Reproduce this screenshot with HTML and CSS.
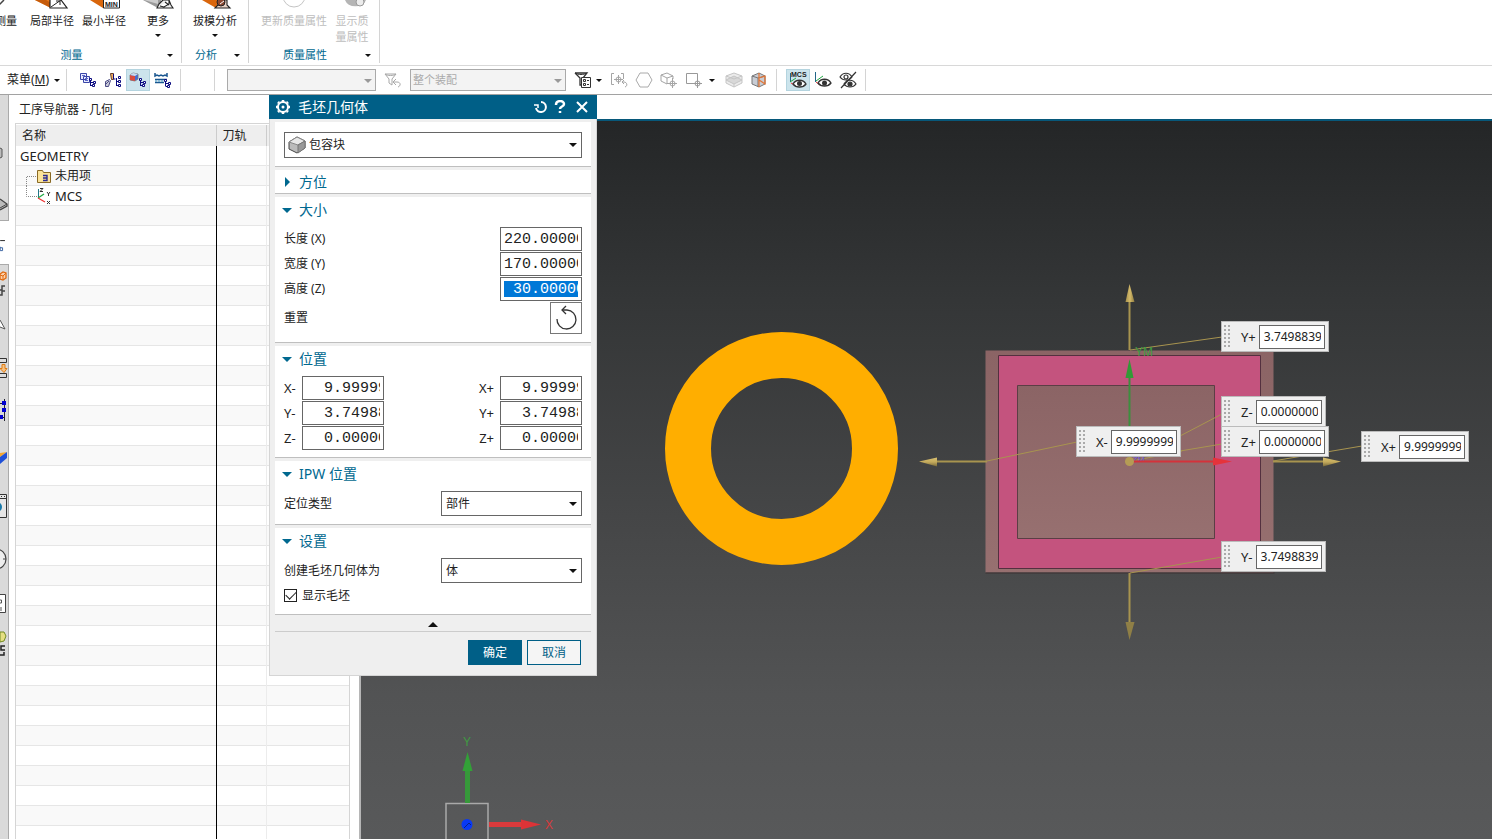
FILE: index.html
```html
<!DOCTYPE html>
<html lang="zh-CN">
<head>
<meta charset="utf-8">
<title>工序导航器 - 几何</title>
<link rel="stylesheet" href="styles.css">
</head>
<body>
<header class="ribbon">
  <section class="group group-measure">
    <div class="group-tools">
      <button class="tool tool-cut"><svg class="tool-icon" width="30" height="12" viewBox="0 0 30 12"><path d="M17 0l-6 6-4-3" fill="none" stroke="#444" stroke-width="1.5"/></svg>测量</button>
      <button class="tool"><svg class="tool-icon" width="34" height="12" viewBox="0 0 34 12"><path d="M0 0h16v8z" fill="#e87a1c"/><path d="M0 0l16 8V3L11 0z" fill="#c65c0b"/><path d="M15 0v8h17l-6-8" fill="#fff" stroke="#222" stroke-width="1.2"/><path d="M16 7L26 0M21 1h4v4" fill="none" stroke="#222"/></svg>局部半径</button>
      <button class="tool"><svg class="tool-icon" width="34" height="12" viewBox="0 0 34 12"><path d="M3 0h13v8z" fill="#d9660c"/><path d="M16.500 -1h16v9h-16z" fill="#fff" stroke="#222"/><text x="18" y="7" class="icon-text">MIN</text></svg>最小半径</button>
      <button class="tool"><svg class="tool-icon" width="34" height="12" viewBox="0 0 34 12"><path d="M2 0l15 8 3-3V0z" fill="#999"/><path d="M3 0h14v4z" fill="#ccc"/><path d="M18 4l4-4h6l2 5 2 3H16zM19 6l4 1 5-3V0M24 2l4 3" fill="#eee" stroke="#222" stroke-width="1.1"/></svg>更多<i class="caret"></i></button>
    </div>
    <button class="group-name">测量<i class="caret"></i></button>
  </section>
  <section class="group group-analysis">
    <div class="group-tools">
      <button class="tool"><svg class="tool-icon" width="34" height="12" viewBox="0 0 34 12"><path d="M4 0l14 8 3-8z" fill="#d9660c"/><path d="M17 8l4-4V0h8v5l3 3z" fill="#e9d2c6" stroke="#222" stroke-width="1.1"/><circle cx="23" cy="2" r="4" fill="#8b4730" stroke="#222"/><path d="M22 4l4-3" stroke="#fff"/></svg>拔模分析<i class="caret"></i></button>
    </div>
    <button class="group-name">分析<i class="caret"></i></button>
  </section>
  <section class="group group-mass">
    <div class="group-tools">
      <button class="tool" disabled><svg class="tool-icon" width="34" height="12" viewBox="0 0 34 12"><circle cx="17" cy="-4" r="11" fill="none" stroke="#c4c4c4"/></svg>更新质量属性</button>
      <button class="tool" disabled><svg class="tool-icon" width="34" height="12" viewBox="0 0 34 12"><path d="M10 0a11 9 0 0 0 21 0z" fill="#b5b5b5"/><circle cx="25" cy="2" r="4" fill="#ececec" stroke="#999"/></svg>显示质<br>量属性</button>
    </div>
    <button class="group-name">质量属性<i class="caret"></i></button>
  </section>
</header>

<div class="toolbar">
  <button class="menu-button"><span>菜单(<u>M</u>)</span><i class="caret"></i></button>
  <i class="divider"></i>
  <div class="view-buttons">
    <button class="icon-button" aria-label="程序顺序视图"><svg width="18" height="16" viewBox="0 0 18 16" fill="#e6eaff" stroke="#3b46a8"><path d="M1.500 1.500h6v6h-6zM4.500 4.500h6v6h-6z"/><path d="M3 3.500h3M6 6.500h3M6 8.500h3" stroke="#5a66c8"/><path d="M11.500 8v6M11.500 10.500h3M11.500 13.500h2" stroke="#0a0a80"/><path d="M10.500 6.500h2v2h-2zM14.500 9.500h2v2h-2zM13.500 12.500h2v2h-2z" fill="#fff" stroke="#0a0a80"/></svg></button>
    <button class="icon-button" aria-label="机床视图"><svg width="18" height="16" viewBox="0 0 18 16"><path d="M1.500 14.500v-5l4-2 1 1-2 6z" fill="#c9cbd8" stroke="#4c4c85"/><path d="M2 12l3-3" stroke="#4c4c85"/><path d="M6.500 1.500h3v6h-2z" fill="#f2b05f" stroke="#653e2b"/><path d="M9.500 2v5h2M12.500 6v8M12.500 9.500h2M12.500 13.500h2" fill="none" stroke="#0a0a80"/><path d="M14.500 4.500h2v2h-2zM14.500 8.500h2v2h-2zM14.500 12.500h2v2h-2z" fill="#fff" stroke="#0a0a80"/></svg></button>
    <button class="icon-button active" aria-label="几何视图"><svg width="18" height="16" viewBox="0 0 18 16"><path d="M1 3l3-2 5 1v5L6 9 1 8z" fill="#466bd2" stroke="#777" stroke-width=".8"/><path d="M1 3l5 1v5L1 8z" fill="#d94c3e"/><path d="M4 1l5 1-3 2-5-1z" fill="#c8dcf0"/><path d="M11.500 8v6M11.500 10.500h3M11.500 13.500h2" stroke="#0a0a80"/><path d="M10.500 6.500h2v2h-2zM14.500 9.500h2v2h-2zM13.500 12.500h2v2h-2z" fill="#fff" stroke="#0a0a80"/></svg></button>
    <button class="icon-button" aria-label="加工方法视图"><svg width="18" height="16" viewBox="0 0 18 16"><path d="M1 1v3l2-1 2 1 2-1 2 1 2-1 2 1V1M1 7.500h12M1 10.500h9" fill="none" stroke="#1b5790" stroke-width="1.500"/><path d="M2 8v2M5 8v2M8 8v2" stroke="#4aa0c8"/><path d="M11.500 9v5M11.500 11.500h3M11.500 14.500h2" stroke="#0a0a80"/><path d="M10.500 7.500h2v2h-2zM14.500 10.500h2v2h-2zM13.500 13.500h2v2h-2z" fill="#fff" stroke="#0a0a80"/></svg></button>
  </div>
  <i class="divider"></i>
  <i class="divider divider-far"></i>
  <span class="filter type-filter"><select aria-label="类型过滤器" disabled><option></option></select></span>
  <button class="icon-button" aria-label="重置过滤器"><svg width="18" height="16" viewBox="0 0 18 16" fill="none" stroke="#a8a8a8"><path d="M1 2h11L8 7v6l-3-2V7zM1 2c2 2 9 2 11 0M14 15c3-1 3-5-1-5h-3M12 7l-3 3 3 3"/></svg></button>
  <span class="filter scope-filter"><select aria-label="选择范围" disabled><option>整个装配</option></select></span>
  <div class="select-buttons">
    <button class="icon-button" aria-label="选择方式"><svg width="18" height="18" viewBox="0 0 18 18" fill="none" stroke="#333"><path d="M1 2h12L9 7M1 2l5 5v7h2" stroke-width="1.300"/><path d="M1 2c3 2 9 2 12 0"/><path d="M7.500 6.500h9v10h-9z" fill="#fff"/><path d="M9.500 8.500h2v2h-2zM9.500 12.500h2v2h-2zM13 9.500h2M13 13.500h2"/></svg></button>
    <i class="caret"></i>
  </div>
  <div class="snap-buttons">
    <button class="icon-button" aria-label="捕捉点"><svg width="18" height="16" viewBox="0 0 18 16" fill="none" stroke="#a5a5a5"><path d="M4 1.500H1.500v11H4M11 1.500h2.500V7M8.500 3v9M4 7.500h9M15 15c3-1 2-5-1-5h-2M14 8l-2 2 2 2"/><circle cx="8.500" cy="7.500" r="2.500"/></svg></button>
    <button class="icon-button" aria-label="多边形"><svg width="18" height="16" viewBox="0 0 18 16" fill="none" stroke="#aaa"><path d="M5 1h8l4 7-4 7H5L1 8z"/></svg></button>
    <button class="icon-button" aria-label="体"><svg width="18" height="16" viewBox="0 0 18 16" fill="none" stroke="#a5a5a5"><path d="M1 3l6-2 6 3v3M1 3v6l6 3V6L1 3M7 6l6-2M12.500 6v10M7 11.500h10"/><circle cx="12.500" cy="11.500" r="2.500"/></svg></button>
    <button class="icon-button" aria-label="矩形"><svg width="18" height="16" viewBox="0 0 18 16" fill="none" stroke="#999"><path d="M8 11.500H1.500v-10h11V6M12.500 6v10M7 11.500h10"/><circle cx="12.500" cy="11.500" r="2.500"/></svg></button>
    <i class="caret"></i>
  </div>
  <div class="snap-buttons">
    <button class="icon-button" aria-label="着色"><svg width="18" height="16" viewBox="0 0 18 16" stroke="#c5c5c5"><path d="M1 4l8-3 8 3v7l-8 4-8-4z" fill="#ececec"/><path d="M1 8l8-4 8 4-8 4z" fill="#d8d8d8"/><path d="M9 12v3M1 4l8 3 8-3" fill="none"/></svg></button>
    <button class="icon-button" aria-label="着色边"><svg width="18" height="16" viewBox="0 0 18 16" stroke="#777"><path d="M2 4l7-3 6 3v8l-6 3-7-3z" fill="#c8ccd4"/><path d="M2 4l6 2 7-2M8 6v9" fill="none"/><path d="M9 15V6l6-2v8l-6-4V1" fill="none" stroke="#e57533" stroke-width="1.200"/></svg></button>
  </div>
  <i class="divider"></i>
  <div class="view-buttons">
    <button class="icon-button active" aria-label="显示 MCS"><svg width="18" height="18" viewBox="0 0 18 18"><text x="2" y="6" class="icon-text">MCS</text><path d="M1.500 2v9" stroke="#268"/><path d="M1 11l6-4" stroke="#2a4"/><path d="M2 12l4 2" stroke="#e33"/><path d="M4 13c3-5 10-5 13 0-3 4-10 4-13 0z" fill="#fff" stroke="#333" stroke-width="1.300"/><circle cx="10.500" cy="12.500" r="2.500" fill="#333"/></svg></button>
    <button class="icon-button" aria-label="显示坐标系"><svg width="18" height="18" viewBox="0 0 18 18"><path d="M1.500 1v10" stroke="#268"/><path d="M2 10l7-5" stroke="#2a4"/><path d="M2 11l4 3" stroke="#e33"/><path d="M4 12c3-5 10-5 13 0-3 4-10 4-13 0z" fill="#fff" stroke="#333" stroke-width="1.300"/><circle cx="10.500" cy="12" r="2.500" fill="#333"/></svg></button>
    <button class="icon-button" aria-label="隐藏"><svg width="18" height="18" viewBox="0 0 18 18" fill="none" stroke="#333" stroke-width="1.200"><path d="M1 6c3-5 9-5 12 0-3 4-9 4-12 0zM5 13c3-5 9-5 12 0-3 4-9 4-12 0zM2 17L17 1"/><circle cx="7" cy="6" r="2"/><circle cx="11" cy="13" r="2" fill="#333"/></svg></button>
  </div>
  <i class="divider"></i>
</div>

<main class="workspace">
  <nav class="rail" aria-label="资源条">
    <button aria-label="装配导航器"><svg viewBox="0 132 8 44"><path d="M0 148l2 1v8l-2 1" fill="#bbb" stroke="#555"/></svg></button>
    <button aria-label="部件导航器"><svg viewBox="0 176 8 44"><path d="M0 199l7 5v2l-7 4" fill="#bbb" stroke="#444" stroke-width="1.300"/><path d="M0 208l7-4" stroke="#444"/></svg></button>
    <button class="active" aria-label="工序导航器"><svg viewBox="0 220 8 45"><path d="M0 240.500h5" stroke="#222"/><path d="M0 247v4h2.500v-3H0" fill="none" stroke="#35619f"/></svg></button>
    <button aria-label="加工特征"><svg viewBox="0 265 8 40"><path d="M0 274l3-2 3 1v5l-3 2-3-1z" fill="#fbd0ab" stroke="#e06a10" stroke-width="1.300"/><path d="M0 275l3 1 3-3M3 276v4" fill="none" stroke="#e06a10"/><path d="M5 286H2v4H0M0 295h2v-4h3" fill="none" stroke="#444" stroke-width="1.500"/></svg></button>
    <button aria-label="机床"><svg viewBox="0 305 8 42"><path d="M0 320l5 9-5-2" fill="#fff" stroke="#555"/></svg></button>
    <button aria-label="流程"><svg viewBox="0 347 8 42"><path d="M-1 358.500h7.500v4H-1zM-1 373.500h7.500v4H-1z" fill="#ddd" stroke="#333"/><path d="M2 364.500v4H0l4 4 3-4H5v-4z" fill="#f6c282" stroke="#e07a10"/></svg></button>
    <button aria-label="重用库"><svg viewBox="0 389 8 44"><path d="M4.500 399v22M0 403.500h5M0 417.500h5" stroke="#223" fill="none"/><path d="M2 401h4v4H2zM2 408h4v4H2zM0 415h3v4H0z" fill="#0000d0"/></svg></button>
    <button aria-label="HD3D"><svg viewBox="0 433 8 48"><path d="M0 453l7-1-7 5z" fill="#f3a52e"/><path d="M0 457l7-5v6l-7 6z" fill="#1f50d8"/></svg></button>
    <button aria-label="浏览器"><svg viewBox="0 481 8 51"><path d="M-1 494.500h7.500v23H-1z" fill="#e6e6e6" stroke="#333"/><path d="M0 498.500h7M1 496.500h1M4 496.500h1" stroke="#333"/><circle cx="-3" cy="507" r="5" fill="#1778a8"/></svg></button>
    <button aria-label="历史记录"><svg viewBox="0 532 8 50"><circle cx="-4" cy="559" r="10" fill="#eee" stroke="#444" stroke-width="1.200"/><path d="M3 559h3" stroke="#444"/></svg></button>
    <button aria-label="角色"><svg viewBox="0 582 8 42"><path d="M-1 594.500h6.500v18H-1z" fill="#fff" stroke="#444"/><path d="M0 600h1.500v3H0M1 607v4" stroke="#555" fill="none"/></svg></button>
    <button aria-label="系统材料"><svg viewBox="0 624 8 38"><path d="M0 632h4l2 4-2 5-4 1z" fill="#e5df82" stroke="#738b22"/><path d="M5 646H1v4h4M0 655h4v-3" fill="none" stroke="#222" stroke-width="1.500"/></svg></button>
  </nav>

  <section class="navigator">
    <h1 class="navigator-title">工序导航器 - 几何</h1>
    <div class="tree">
      <table>
        <thead><tr><th>名称</th><th>刀轨</th><th></th></tr></thead>
        <tbody>
          <tr><td class="latin">GEOMETRY</td><td></td><td></td></tr>
          <tr><td><span class="node"><svg width="34" height="20" viewBox="0 0 34 20"><path d="M6.500 20V10.500H17" fill="none" stroke="#888" stroke-dasharray="1 1"/><path d="M17.500 4.500h5l1 2h7v10h-13z" fill="#fbe39a" stroke="#8a6a25"/><path d="M23 9.500h4v5h-4M23 12h4" fill="none" stroke="#2a2a90" stroke-width="1.400"/></svg>未用项</span></td><td></td><td></td></tr>
          <tr><td class="latin"><span class="node"><svg width="34" height="20" viewBox="0 0 34 20"><path d="M6.500 0v10.500H17" fill="none" stroke="#888" stroke-dasharray="1 1"/><path d="M18.500 3v9" stroke="#278"/><path d="M18 12l6-4" stroke="#2a4" stroke-width="1.300"/><path d="M18 12l7 4" stroke="#e33" stroke-width="1.300"/><path d="M20 2.500h3l-3 3h3M27 6l1.500 2L30 6M28.500 8v2M27 15l3 3M30 15l-3 3" fill="none" stroke="#333"/></svg>MCS</span></td><td></td><td></td></tr>
        </tbody>
      </table>
    </div>
  </section>

  <section class="viewport">
    <div class="scene">
      <svg class="drawing" aria-hidden="true">
        <defs>
          <linearGradient id="block" x1="0" y1="0" x2="0" y2="1"><stop offset="0" stop-color="#8b6465"/><stop offset="1" stop-color="#977070"/></linearGradient>
          <linearGradient id="gold" x1="0" y1="0" x2="1" y2="0"><stop offset="0" stop-color="#a8924c"/><stop offset="0.5" stop-color="#d4ba6a"/><stop offset="1" stop-color="#8d7a3e"/></linearGradient>
          <linearGradient id="gold-side" x1="0" y1="0" x2="0" y2="1"><stop offset="0" stop-color="#d8c070"/><stop offset="0.5" stop-color="#c4aa5c"/><stop offset="1" stop-color="#76683a"/></linearGradient>
        </defs>
        <g transform="translate(-361 -121)">
          <circle cx="781.5" cy="448.5" r="93.5" fill="none" stroke="#ffae00" stroke-width="46"/>
          <path d="M985.500 350.500h288v222h-288z" fill="url(#block)"/>
          <path d="M985.500 573h289" stroke="#3c3033"/>
          <path d="M998.500 355.500h262v213h-262z" fill="#c4537e" stroke="#54303f"/>
          <path d="M1017.500 385.500h197v153h-197z" fill="url(#block)" stroke="#5b3e45"/>
          <g fill="none" stroke="#a8944f">
            <path d="M1130 350l92-13M987 461l90-19M1180 436l42-22M1180 451l42-7M1130 573l92-16M1273 461l89-15M1132 461l50-10"/>
            <path d="M1129.500 350V300M1129.500 573V624M987 461.500h-50M1273 461.500h50" stroke-width="2"/>
          </g>
          <path d="M1129.500 284l5 18h-9z" fill="url(#gold)"/>
          <path d="M1129.500 640l5-18h-9z" fill="#8f7f46"/>
          <path d="M919 461.500l18-4v9zM1341 461.500l-18-4v9z" fill="url(#gold-side)"/>
          <path d="M1129.500 461V376" stroke="#3c8f3e" stroke-width="2"/>
          <path d="M1129.500 359l4 19h-8z" fill="#329a36"/>
          <text x="1135" y="356" class="axis-small green">YM</text>
          <text x="1133" y="462" class="axis-tiny">ZM</text>
          <path d="M1130 461.500h84" stroke="#d4323a" stroke-width="2"/>
          <path d="M1232 461.500l-19-4v8z" fill="#e5333b"/>
          <circle cx="1129.500" cy="461.500" r="4.500" fill="#b59c55"/>
          <path d="M446 839V803.500h42V839" fill="none" stroke="#a9a9a9" stroke-width="1.500"/>
          <path d="M467.500 803V770" stroke="#36993a" stroke-width="5"/>
          <path d="M467.500 752l5 19h-10z" fill="#32a137"/>
          <path d="M489 824.500h33" stroke="#d93a3c" stroke-width="5"/>
          <path d="M541 824.500l-20-5v10z" fill="#dd3337"/>
          <circle cx="467" cy="824.500" r="5.500" fill="#0939f5"/><path d="M464 828l5-5 2 2" stroke="#082487" fill="none"/>
          <text x="463" y="746" class="axis green">Y</text>
          <text x="545" y="829" class="axis red">X</text>
        </g>
      </svg>
      <label class="flag flag-y-plus">Y+<input value="3.74988390"></label>
      <label class="flag flag-z-minus">Z-<input value="0.00000000"></label>
      <label class="flag flag-z-plus">Z+<input value="0.00000000"></label>
      <label class="flag flag-x-minus">X-<input value="9.99999999"></label>
      <label class="flag flag-x-plus">X+<input value="9.99999999"></label>
      <label class="flag flag-y-minus">Y-<input value="3.74988390"></label>
    </div>
  </section>

  <form class="dialog" role="dialog" aria-label="毛坯几何体">
    <header class="dialog-bar">
      <svg width="16" height="16" viewBox="0 0 16 16"><circle cx="8" cy="8" r="5" fill="none" stroke="#fff" stroke-width="2"/><circle cx="8" cy="8" r="1.500" fill="#fff"/><path d="M8 1v2M8 13v2M1 8h2M13 8h2M3 3l1 1M12 12l1 1M3 13l1-1M12 4l1-1" stroke="#fff" stroke-width="2.500"/></svg>
      <h2>毛坯几何体</h2>
      <button type="button" aria-label="重置"><svg width="14" height="14" viewBox="0 0 14 14" fill="none" stroke="#fff" stroke-width="2"><path d="M8 2a5 5 0 1 1-5 6"/><path d="M1 5h4v3" stroke-width="1.500"/></svg></button>
      <button type="button" aria-label="帮助"><svg width="12" height="14" viewBox="0 0 12 14" fill="none" stroke="#fff" stroke-width="2.500"><path d="M2 5c0-5 8-5 8-1 0 3-4 2-4 5M6 11v2"/></svg></button>
      <button type="button" aria-label="关闭"><svg width="14" height="14" viewBox="0 0 14 14" stroke="#fff" stroke-width="2"><path d="M2 2l10 10M12 2L2 12"/></svg></button>
    </header>
    <section class="panel panel-type">
      <span class="select with-icon"><svg width="18" height="18" viewBox="0 0 18 18" stroke="#444"><path d="M1 6l8-5 8 4v7l-8 5-8-4z" fill="#bbb"/><path d="M1 6l8-5 8 4-7 4z" fill="#e8e8e8" stroke="#888"/><path d="M10 9v8l7-5V5z" fill="#999" stroke="#777"/></svg><select aria-label="类型"><option>包容块</option></select></span>
    </section>
    <section class="panel">
      <button type="button" class="heading collapsed">方位</button>
    </section>
    <section class="panel">
      <button type="button" class="heading">大小</button>
      <div class="fields size-fields">
        <label for="len">长度 (X)</label><input id="len" class="number" value="220.000000">
        <label for="wid">宽度 (Y)</label><input id="wid" class="number" value="170.000000">
        <label for="hei">高度 (Z)</label><input id="hei" class="number selected" value=" 30.000000">
        <label for="reset">重置</label><button type="button" id="reset" class="reset" aria-label="重置"><svg width="24" height="26" viewBox="0 0 24 26" fill="none" stroke="#333" stroke-width="1.300"><path d="M3 14a9.500 9.500 0 1 0 10-9H8"/><path d="M12 1L8 5l4 4"/></svg></button>
      </div>
    </section>
    <section class="panel">
      <button type="button" class="heading">位置</button>
      <div class="fields position-fields">
        <label for="xm">X-</label><input id="xm" class="number" value="  9.999999"><label for="xp" class="second">X+</label><input id="xp" class="number" value="  9.999999">
        <label for="ym">Y-</label><input id="ym" class="number" value="  3.749883"><label for="yp" class="second">Y+</label><input id="yp" class="number" value="  3.749883">
        <label for="zm">Z-</label><input id="zm" class="number" value="  0.000000"><label for="zp" class="second">Z+</label><input id="zp" class="number" value="  0.000000">
      </div>
    </section>
    <section class="panel">
      <button type="button" class="heading">IPW 位置</button>
      <div class="fields choice-fields">
        <label for="loc">定位类型</label><span class="select"><select id="loc"><option>部件</option></select></span>
      </div>
    </section>
    <section class="panel">
      <button type="button" class="heading">设置</button>
      <div class="fields choice-fields">
        <label for="make">创建毛坯几何体为</label><span class="select"><select id="make"><option>体</option></select></span>
        <label class="check"><input type="checkbox" checked>显示毛坯</label>
      </div>
    </section>
    <button type="button" class="fold" aria-label="收起"></button>
    <footer class="actions">
      <button type="button" class="primary">确定</button>
      <button type="button">取消</button>
    </footer>
  </form>
</main>
</body>
</html>
```
FILE: styles.css
```css
* { box-sizing: border-box; }

body {
  margin: 0;
  height: 100vh;
  display: flex;
  flex-direction: column;
  overflow: hidden;
  background: #fff;
  color: #222;
  font: 12px/16px "Noto Sans", "Noto Sans CJK SC", sans-serif;
}

button, input, select { font: inherit; color: inherit; }
button { border: 0; padding: 0; background: none; }
svg { flex: none; }
.icon-text { font: bold 7px "Liberation Sans", sans-serif; fill: #222; }

.caret {
  flex: none;
  border: 3px solid transparent;
  border-top-color: #111;
  border-bottom-width: 0;
}

/* Ribbon */
.ribbon {
  display: flex;
  flex: none;
  height: 66px;
  padding-bottom: 2px;
  border-bottom: 1px solid #d8d8d8;
  font-size: 11px;
}
.group {
  display: flex;
  flex-direction: column;
  justify-content: space-between;
  border-right: 1px solid #d4d4d4;
}
.group-measure { width: 182px; }
.group-analysis { width: 67px; }
.group-mass { width: 131px; }
.group-tools { display: flex; gap: 8px; }
.group-analysis .group-tools { justify-content: center; }
.group-mass .group-tools { padding-left: 12px; }
.tool {
  display: flex;
  flex-direction: column;
  align-items: center;
  white-space: nowrap;
  line-height: 16px;
}
.tool-icon { margin-bottom: 1px; }
.tool:disabled { color: #bdbdbd; }
.tool .caret { margin-top: 5px; }
.tool-cut { width: 22px; align-items: flex-end; margin: 0 5px 0 -5px; }
.tool:nth-child(4) { margin-left: 7px; }
.group-name {
  display: grid;
  grid-template-columns: 1fr auto;
  align-items: center;
  padding: 0 8px 0 0;
  color: #00688f;
  line-height: 16px;
}
.group-measure .group-name { text-indent: -24px; }
.group-analysis .group-name { text-indent: -4px; }
.group-mass .group-name { text-indent: -4px; }

/* Selection toolbar */
.toolbar {
  display: flex;
  flex: none;
  align-items: center;
  gap: 5px;
  height: 29px;
  padding-left: 7px;
  border-bottom: 1px solid #a2a2a2;
}
.menu-button { display: flex; align-items: center; gap: 5px; width: 54px; white-space: nowrap; }
.divider { width: 1px; height: 22px; background: #d4d4d4; }
.divider-far { margin-left: 28px; }
.view-buttons, .snap-buttons, .select-buttons { display: flex; align-items: center; gap: 1px; }
.divider + .view-buttons { margin-left: 4px; }
.icon-button {
  display: flex;
  align-items: center;
  justify-content: center;
  width: 24px;
  height: 22px;
}
.icon-button.active { background: #cce4ec; border: 1px solid #b4d4df; }
.filter { position: relative; height: 22px; }
.filter select {
  appearance: none;
  width: 100%;
  height: 22px;
  padding: 0 2px;
  border: 1px solid #aaa;
  border-radius: 0;
  background: #f3f3f3;
  color: #aaa;
  font-size: 11px;
  opacity: 1;
}
.filter::after {
  content: "";
  position: absolute;
  right: 4px;
  top: 10px;
  border: 4px solid transparent;
  border-top-color: #999;
  border-bottom-width: 0;
}
.type-filter { width: 149px; margin-left: 7px; }
.scope-filter { width: 156px; }
.snap-buttons .caret { margin: 0 2px; }

/* Workspace */
.workspace {
  position: relative;
  display: flex;
  flex: 1;
  min-height: 0;
}
.rail {
  display: grid;
  flex: none;
  grid-template-rows: 44px 44px 45px 40px 42px 42px 44px 48px 51px 50px 42px 38px;
  width: 9px;
  padding-top: 37px;
  border-right: 1px solid #aaa;
  background: #dadada;
}
.rail button { overflow: hidden; }
.rail svg { display: block; width: 8px; height: 100%; }
.rail .active {
  margin-right: -1px;
  border: solid #aaa;
  border-width: 1px 0;
  background: #fff;
}

.navigator {
  display: flex;
  flex: none;
  flex-direction: column;
  width: 352px;
  padding: 0 9px 0 6px;
  border-right: 2px solid #b6b6b6;
}
.navigator-title {
  margin: 0;
  padding: 7px 4px 5px;
  font-size: 12px;
  font-weight: normal;
  line-height: 16px;
}
.tree {
  flex: 1;
  min-height: 0;
  border: 1px solid #d5d5d5;
  border-bottom: 0;
  padding-top: 1px;
  overflow: hidden;
  background:
    linear-gradient(#000, #000) 200px 22px / 1px 100% no-repeat,
    linear-gradient(#ececec, #ececec) 250px 22px / 1px 100% no-repeat,
    repeating-linear-gradient(#fff 0 19px, #e6e6e6 19px 20px, #f9f9f9 20px 39px, #e6e6e6 39px 40px) 0 22px no-repeat;
}
.tree table { width: 100%; border-collapse: collapse; table-layout: fixed; }
.tree th {
  height: 21px;
  padding: 0 6px;
  border-right: 1px solid #ccc;
  background: #eee;
  font-weight: normal;
  text-align: left;
}
.tree th:nth-child(1) { width: 200px; }
.tree th:nth-child(2) { width: 50px; }
.tree td { height: 20px; padding: 0 4px; line-height: 18px; }
.tree .latin { font-size: 13px; }
.node { display: flex; align-items: center; gap: 1px; }

/* Graphics window */
.viewport {
  display: flex;
  flex: 1;
  flex-direction: column;
  min-width: 0;
  padding-top: 24px;
}
.scene {
  position: relative;
  flex: 1;
  overflow: hidden;
  border-top: 2px solid #07587a;
  background: linear-gradient(#242627, #343637 25%, #454647 55%, #525354 80%, #58595a);
}
.drawing { display: block; width: 100%; height: 100%; }
.axis { font: 12px "Liberation Sans", sans-serif; }
.axis-small { font: 12px "Liberation Sans", sans-serif; }
.axis-tiny { font: 8px "Liberation Sans", sans-serif; fill: #6655d8; }
.green { fill: #3f9b42; }
.red { fill: #d83a3c; }

.flag {
  position: absolute;
  display: flex;
  align-items: center;
  gap: 3px;
  height: 31px;
  padding: 0 3px 0 19px;
  border: 1px solid #bbb;
  background: #efefef;
  font-size: 13px;
}
.flag::before {
  content: "";
  position: absolute;
  left: 2px;
  top: 3px;
  width: 8px;
  height: 23px;
  background: radial-gradient(circle at 1px 1px, #aaa 1px, transparent 1px) 0 0 / 4px 4px;
}
.flag input {
  width: 66px;
  height: 24px;
  padding: 0 3px 0 4px;
  border: 1px solid #666;
  background: #fff;
  font-size: 12px;
}
.flag-y-plus { left: 860px; top: 200px; }
.flag-z-minus { left: 860px; top: 275px; }
.flag-z-plus { left: 860px; top: 305px; }
.flag-x-minus { left: 715px; top: 305px; }
.flag-x-plus { left: 1000px; top: 310px; }
.flag-y-minus { left: 860px; top: 420px; }

/* Blank geometry dialog */
.dialog {
  position: absolute;
  left: 269px;
  top: 0;
  display: flex;
  flex-direction: column;
  gap: 3px;
  width: 328px;
  padding-bottom: 10px;
  border: solid #d5d5d5;
  border-width: 0 1px 1px;
  background: #efefef;
}
.dialog-bar {
  display: flex;
  align-items: center;
  gap: 7px;
  height: 24px;
  margin: 0 -1px;
  padding: 0 8px 0 6px;
  background: #005f87;
  color: #fff;
}
.dialog-bar h2 { flex: 1; margin: 0; font-size: 14px; font-weight: normal; line-height: 20px; }
.dialog-bar button { display: flex; }
.dialog-bar button:last-child { margin-left: 2px; }
.panel { margin: 0 5px; border-bottom: 1px solid #bfbfbf; background: #fff; }
.panel-type { padding: 10px 9px 8px; }
.heading {
  display: flex;
  align-items: center;
  gap: 7px;
  width: 100%;
  height: 26px;
  padding-left: 7px;
  color: #00688f;
  font-size: 14px;
  line-height: 20px;
}
.heading::before {
  content: "";
  border: 5px solid transparent;
  border-top-color: #00688f;
  border-bottom-width: 0;
}
.heading.collapsed { height: 23px; gap: 9px; padding-left: 10px; }
.heading.collapsed::before { border: 5px solid transparent; border-left-color: #00688f; border-right-width: 0; }
.fields { display: grid; align-items: center; row-gap: 1px; padding: 4px 9px 8px; }
.size-fields { grid-template-columns: 1fr 82px; }
.position-fields { grid-template-columns: 18px 82px 1fr 82px; padding-bottom: 7px; font-size: 13px; }
.choice-fields { grid-template-columns: 1fr 141px; row-gap: 2px; }
.second { justify-self: end; padding-right: 6px; }
.number {
  width: 82px;
  height: 24px;
  padding: 3px;
  border: 1px solid #666;
  background: #fff;
  font: 15px/18px "Liberation Mono", monospace;
  white-space: pre;
}
.number.selected { background: #0078d7 content-box; color: #fff; }
.reset {
  display: flex;
  align-items: center;
  justify-content: center;
  justify-self: end;
  width: 32px;
  height: 32px;
  border: 1px solid #777;
}
.select { position: relative; display: block; }
.select select {
  display: block;
  appearance: none;
  width: 100%;
  height: 25px;
  padding: 0 4px;
  border: 1px solid #666;
  border-radius: 0;
  background: #fff;
}
.select::after {
  content: "";
  position: absolute;
  right: 5px;
  top: 11px;
  border: 4px solid transparent;
  border-top-color: #111;
  border-bottom-width: 0;
  pointer-events: none;
}
.with-icon select { height: 26px; padding-left: 24px; }
.with-icon svg { position: absolute; left: 4px; top: 4px; }
.check { display: flex; align-items: center; gap: 5px; height: 21px; }
.check input {
  appearance: none;
  display: grid;
  place-items: center;
  width: 13px;
  height: 13px;
  margin: 0;
  border: 1px solid #222;
  background: #fff;
}
.check input:checked::before {
  content: "";
  width: 9px;
  height: 5px;
  margin-bottom: 3px;
  border: solid #222;
  border-width: 0 0 1px 1px;
  transform: rotate(-45deg);
}
.fold {
  display: flex;
  justify-content: center;
  align-items: center;
  height: 14px;
  margin: 0 5px;
  border-bottom: 1px solid #ccc;
}
.fold::before {
  content: "";
  border: 5px solid transparent;
  border-bottom-color: #111;
  border-top-width: 0;
}
.actions { display: flex; justify-content: flex-end; gap: 5px; padding: 5px 15px 0; }
.actions button {
  width: 54px;
  height: 25px;
  border: 1px solid #005f87;
  color: #005f87;
  background: #f5f5f5;
}
.actions .primary { background: #005f87; color: #fff; }
```
